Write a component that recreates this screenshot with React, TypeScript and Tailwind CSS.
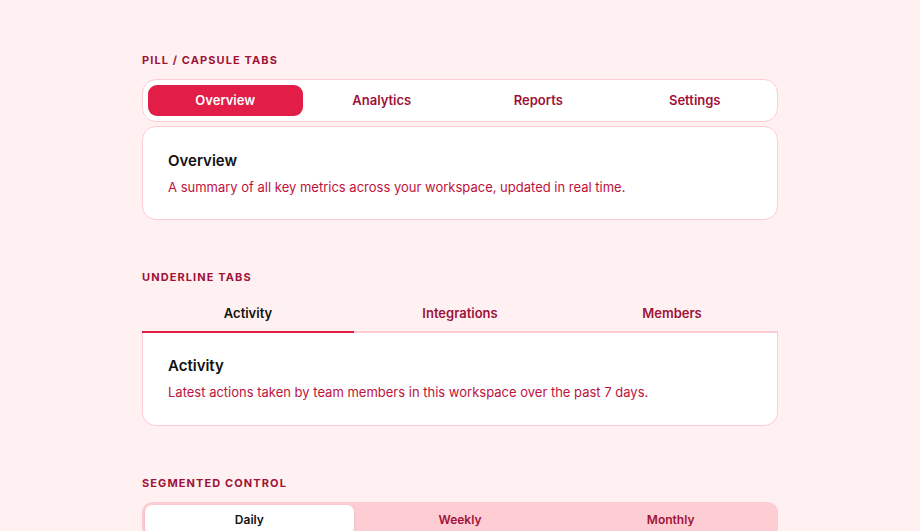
export default function App() {
  const font = { fontFamily: "Inter, 'Noto Sans', sans-serif" };
  const H = ({ t }: { t: string }) => (
    <div className="text-[11px] font-bold tracking-[0.1em] text-[#9f1239] leading-4 mb-[11px]">{t}</div>
  );
  return (
    <div style={font} className="min-h-[531px] bg-[#fff1f2] pt-[52px] flex justify-center">
      <div className="w-[636px] flex flex-col">
        <H t="PILL / CAPSULE TABS" />
        <div className="bg-white border border-[#fecdd3] rounded-[14px] p-[5px] grid grid-cols-4 gap-[2px]">
          {["Overview", "Analytics", "Reports", "Settings"].map((t, i) => (
            <div key={t} className={`h-[31px] flex items-center justify-center rounded-[9px] text-[13px] font-semibold ${i === 0 ? "bg-[#e11d48] text-white" : "text-[#9f1239]"}`}>{t}</div>
          ))}
        </div>
        <div className="mt-[4px] bg-white border border-[#fecdd3] rounded-[14px] h-[94px] px-[25px] pt-[24px]">
          <div className="text-[15px] font-semibold text-[#111] leading-5">Overview</div>
          <div className="text-[13px] text-[#be123c] mt-[6px] leading-5">A summary of all key metrics across your workspace, updated in real time.</div>
        </div>

        <div className="mt-[49px]"><H t="UNDERLINE TABS" /></div>
        <div className="grid grid-cols-3 border-b-2 border-[#fecdd3]">
          {["Activity", "Integrations", "Members"].map((t, i) => (
            <div key={t} className={`h-[37px] -mb-[2px] flex items-center justify-center text-[13px] font-semibold border-b-2 ${i === 0 ? "border-[#e11d48] text-[#111]" : "border-transparent text-[#9f1239]"}`}>{t}</div>
          ))}
        </div>
        <div className="bg-white border border-t-0 border-[#fecdd3] rounded-b-[14px] h-[93px] px-[25px] pt-[23px]">
          <div className="text-[15px] font-semibold text-[#111] leading-5">Activity</div>
          <div className="text-[13px] text-[#be123c] mt-[6px] leading-5">Latest actions taken by team members in this workspace over the past 7 days.</div>
        </div>

        <div className="mt-[49px]"><H t="SEGMENTED CONTROL" /></div>
        <div className="bg-[#fecdd3] rounded-[10px] p-[3px] grid grid-cols-3 gap-[2px]">
          {["Daily", "Weekly", "Monthly"].map((t, i) => (
            <div key={t} className={`h-[30px] flex items-center justify-center rounded-[7px] text-[12px] font-semibold ${i === 0 ? "bg-white text-[#111] shadow-sm" : "text-[#9f1239]"}`}>{t}</div>
          ))}
        </div>
      </div>
    </div>
  );
}
